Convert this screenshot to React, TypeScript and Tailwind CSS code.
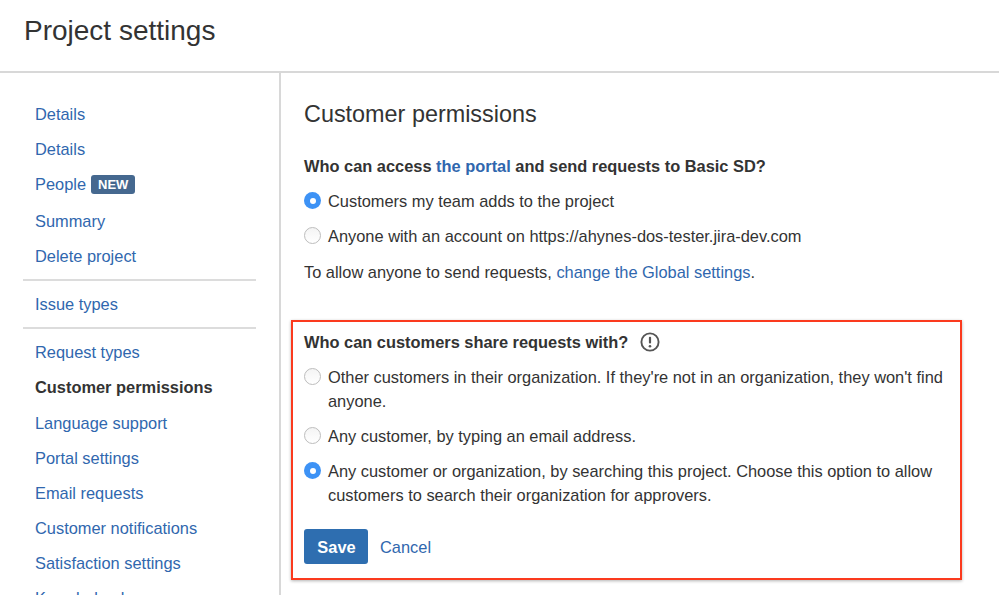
const font = { fontFamily: '"Liberation Sans", Arial, sans-serif' };

function Radio({ checked }: { checked?: boolean }) {
  return checked ? (
    <span className="mt-[3px] flex h-[17px] w-[17px] shrink-0 items-center justify-center rounded-full bg-[#3d92f5]">
      <span className="h-[6px] w-[6px] rounded-full bg-white" />
    </span>
  ) : (
    <span className="mt-[3px] h-[17px] w-[17px] shrink-0 rounded-full border border-[#bdbdbd] bg-gradient-to-b from-[#f4f4f4] to-white" />
  );
}

function Option({ checked, children }: { checked?: boolean; children: React.ReactNode }) {
  return (
    <div className="flex gap-[7px] text-[16.4px] leading-[24px] text-[#333333]">
      <Radio checked={checked} />
      <span>{children}</span>
    </div>
  );
}

function NavLink({ children, bold, extra = "" }: { children: React.ReactNode; bold?: boolean; extra?: string }) {
  return (
    <div className={`flex h-[35px] items-center text-[16.4px] ${extra} ${bold ? "font-bold text-[#333333]" : "text-[#3067ae]"}`}>
      {children}
    </div>
  );
}

export default function App() {
  return (
    <div className="h-[595px] w-[999px] overflow-hidden bg-white" style={font}>
      <header className="flex h-[73px] items-start border-b-2 border-[#d8d8d8] pl-[24px] pt-[12px]">
        <h1 className="text-[28px] leading-[38px] text-[#333333]">Project settings</h1>
      </header>
      <div className="flex">
        <aside className="h-[522px] w-[281px] shrink-0 overflow-hidden border-r-2 border-[#d8d8d8] pl-[23px] pr-[23px] pt-[24px]">
          <div className="pl-[12px]">
            <NavLink>Details</NavLink>
            <NavLink>Details</NavLink>
            <NavLink>
              People
              <span className="ml-[5px] rounded-[3px] bg-[#45688f] px-[7px] py-[1px] text-[13px] font-bold leading-[17px] text-white">NEW</span>
            </NavLink>
            <NavLink extra="mt-[2px]">Summary</NavLink>
            <NavLink>Delete project</NavLink>
          </div>
          <div className="mt-[5px] border-t-2 border-[#dcdcdc] pb-[5px] pl-[12px] pt-[6px]">
            <NavLink>Issue types</NavLink>
          </div>
          <div className="border-t-2 border-[#dcdcdc] pl-[12px] pt-[6px]">
            <NavLink>Request types</NavLink>
            <NavLink bold>Customer permissions</NavLink>
            <NavLink extra="mt-[1px]">Language support</NavLink>
            <NavLink>Portal settings</NavLink>
            <NavLink>Email requests</NavLink>
            <NavLink>Customer notifications</NavLink>
            <NavLink>Satisfaction settings</NavLink>
            <NavLink>Knowledge base</NavLink>
          </div>
        </aside>
        <main className="flex-1 pl-[10px] pr-[37px] pt-[26px]">
          <div className="pl-[13px]">
            <h2 className="text-[23.4px] leading-[30px] text-[#333333]">Customer permissions</h2>
            <p className="mt-[25px] text-[16.4px] font-bold leading-[24px] text-[#333333]">
              Who can access <span className="text-[#3067ae]">the portal</span> and send requests to Basic SD?
            </p>
            <div className="mt-[11px] flex flex-col gap-[11px]">
              <Option checked>Customers my team adds to the project</Option>
              <Option>Anyone with an account on https://ahynes-dos-tester.jira-dev.com</Option>
            </div>
            <p className="mt-[12px] text-[16.4px] leading-[24px] text-[#333333]">
              To allow anyone to send requests, <span className="text-[#3067ae]">change the Global settings</span>.
            </p>
          </div>
          <section className="mt-[36px] h-[260px] border-2 border-[#fb3a1e] pl-[11px] pr-[12px] pt-[8px] shadow-[0_1px_3px_rgba(0,0,0,0.3)]">
            <div className="flex items-center gap-[12px]">
              <p className="text-[16.4px] font-bold leading-[24px] text-[#333333]">Who can customers share requests with?</p>
              <svg width="20" height="20" viewBox="0 0 20 20" fill="none">
                <circle cx="10" cy="10" r="8.6" stroke="#555555" strokeWidth="1.9" />
                <rect x="8.9" y="4.8" width="2.2" height="6.8" rx="1" fill="#555555" />
                <circle cx="10" cy="14.2" r="1.3" fill="#555555" />
              </svg>
            </div>
            <div className="mt-[11px] flex flex-col gap-[11px]">
              <Option>Other customers in their organization. If they're not in an organization, they won't find anyone.</Option>
              <Option>Any customer, by typing an email address.</Option>
              <Option checked>Any customer or organization, by searching this project. Choose this option to allow customers to search their organization for approvers.</Option>
            </div>
            <div className="mt-[22px] flex items-center gap-[12px]">
              <button className="h-[35px] w-[64px] rounded-[3px] bg-[#2e6eb0] pl-[1px] pt-[1px] text-[16.4px] font-bold text-white">Save</button>
              <span className="mt-[1px] text-[16.4px] text-[#3067ae]">Cancel</span>
            </div>
          </section>
        </main>
      </div>
    </div>
  );
}
